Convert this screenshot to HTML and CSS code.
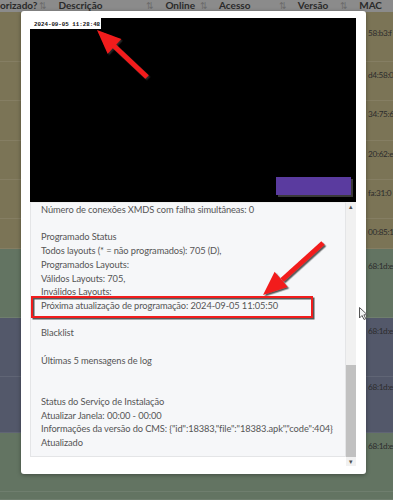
FILE: index.html
```html
<!DOCTYPE html>
<html lang="pt-BR">
<head>
    <meta charset="UTF-8">
    <meta name="viewport" content="width=device-width, initial-scale=1.0">
    <title>Status do display</title>
    <link rel="stylesheet" href="styles.css">
</head>
<body>
    <div class="table">
        <div class="thead">
            <div class="th c1"><span>orizado?</span><span class="sort">&#8645;</span></div>
            <div class="th c2"><span>Descrição</span><span class="sort">&#8645;</span></div>
            <div class="th c3"><span>Online</span><span class="sort">&#8645;</span></div>
            <div class="th c4"><span>Acesso</span><span class="sort">&#8645;</span></div>
            <div class="th c5"><span>Versão</span><span class="sort">&#8645;</span></div>
            <div class="th c6"><span>MAC</span></div>
        </div>
        <div class="row warn first"><div class="mac">58:b3:f</div></div>
        <div class="row warn r39"><div class="mac">d4:58:0</div></div>
        <div class="row warn r40"><div class="mac">34:75:6</div></div>
        <div class="row warn r39"><div class="mac">20:62:e</div></div>
        <div class="row warn r39"><div class="mac">fa:31:0</div></div>
        <div class="row warn r30"><div class="mac">00:85:1</div></div>
        <div class="row ok r69"><div class="mac">68:1d:e</div></div>
        <div class="row info r59"><div class="mac">68:1d:e</div></div>
        <div class="row info r56"><div class="mac">68:1d:e</div></div>
        <div class="row ok r59"><div class="mac">68:1d:e</div></div>
        <div class="row ok last"></div>
    </div>

    <div class="modal">
        <div class="screenshot">
            <div class="stamp">2024-09-05 11:28:48</div>
            <div class="widget"></div>
        </div>
        <div class="scroller">
            <div class="status">Número de conexões XMDS com falha simultâneas: 0

Programado Status
Todos layouts (* = não programados): 705 (D),
Programados Layouts:
Válidos Layouts: 705,
Inválidos Layouts:
Próxima atualização de programação: 2024-09-05 11:05:50

Blacklist

Últimas 5 mensagens de log


Status do Serviço de Instalação
Atualizar Janela: 00:00 - 00:00
Informações da versão do CMS: {"id":18383,"file":"18383.apk","code":404}
Atualizado</div>
            <div class="scrollbar">
                <div class="arrow">&#9652;</div>
                <div class="track"><div class="thumb"></div></div>
                <div class="arrow">&#9662;</div>
            </div>
        </div>
    </div>

    <!-- annotations drawn on top of the capture -->
    <svg class="marks" width="393" height="500" viewBox="0 0 393 500">
        <defs>
            <filter id="shadow" x="-20%" y="-20%" width="140%" height="140%">
                <feDropShadow dx="1.5" dy="1.5" stdDeviation="0.7" flood-color="#333" flood-opacity="0.8"/>
            </filter>
        </defs>
        <g filter="url(#shadow)" fill="#f21b1b" stroke="#f21b1b">
            <line x1="147" y1="77" x2="113" y2="45" stroke-width="5"/>
            <polygon points="97,30 121.3,39.1 107.6,53.7" stroke="none"/>
            <line x1="323" y1="243" x2="282" y2="280" stroke-width="5"/>
            <polygon points="263,295 287.7,286.9 274.6,271.7" stroke="none"/>
            <rect x="32" y="297" width="280" height="20" fill="none" stroke-width="2"/>
        </g>
        <path d="M359.5 307.5 L359.5 318 L362 315.5 L364 319.5 L365.8 318.7 L363.9 314.8 L367.3 314.8 Z" fill="#f4f4f4" stroke="#555" stroke-width="1"/>
    </svg>
</body>
</html>
```

FILE: styles.css
```css
body {
    margin: 0;
    width: 393px;
    height: 500px;
    overflow: hidden;
    position: relative;
    font-family: Lato, 'Open Sans', sans-serif;
    background-color: #636f63;
}

/* table behind the modal */

.table {
    height: 500px;
    overflow: hidden;
}

.thead {
    display: flex;
    height: 12px;
    background-color: #8b8b8b;
    font-size: 10px;
    font-weight: 700;
    color: #2a2a2a;
    line-height: 11px;
    overflow: hidden;
}

.th {
    display: flex;
    justify-content: space-between;
    padding-right: 11px;
    box-sizing: border-box;
    white-space: nowrap;
}

.sort {
    font-weight: 400;
    color: #6c6c6c;
    font-size: 9px;
}

.c1 { width: 60px; }
.c2 { width: 110px; }
.c3 { width: 55px; }
.c4 { width: 81px; }
.c5 { width: 63px; }
.c6 { flex: 1; }

.row {
    box-sizing: border-box;
    padding: 7px 0 0 368px;
    border-bottom: 1px solid rgba(255, 255, 255, 0.08);
    white-space: nowrap;
    overflow: hidden;
}

.mac {
    font-size: 8.2px;
    letter-spacing: -0.3px;
    line-height: 12px;
    color: #2c2c2c;
}

.first { height: 50px; padding-top: 15px; }
.r30 { height: 30px; }
.r39 { height: 39px; }
.r40 { height: 40px; }
.r56 { height: 56px; padding-top: 4px; }
.r59 { height: 59px; }
.r69 { height: 69px; padding-top: 11px; }
.last { height: 8px; }

.warn { background-color: #7b7456; }
.ok { background-color: #637462; }
.info { background-color: #53586a; }

/* modal */

.modal {
    position: absolute;
    left: 21px;
    top: 11px;
    width: 345px;
    height: 463px;
    box-sizing: border-box;
    padding: 7px 10px 0 9px;
    background-color: #ffffff;
    border-radius: 3px;
    box-shadow: 0 1px 4px rgba(0, 0, 0, 0.35);
}

.screenshot {
    height: 184px;
    background-color: #000000;
    display: flex;
    flex-direction: column;
    align-items: flex-start;
}

.stamp {
    background-color: #ffffff;
    width: 71px;
    height: 11px;
    box-sizing: border-box;
    padding: 3px 0 0 4px;
    font-family: 'Liberation Mono', monospace;
    font-size: 5.8px;
    line-height: 7px;
    font-weight: 700;
    color: #111111;
    white-space: nowrap;
}

.widget {
    margin-top: auto;
    margin-bottom: 7px;
    align-self: flex-end;
    margin-right: 5px;
    width: 75px;
    height: 18px;
    background-color: #5a3b9f;
    box-shadow: 2px 2px 0 #3a3a3a;
}

.scroller {
    display: flex;
    height: 264px;
}

.status {
    flex: 1;
    height: 255px;
    box-sizing: border-box;
    padding: 0 10px;
    background-color: #f6f7f9;
    border: 1px solid #e4e5e7;
    border-top-color: #eeeeee;
    white-space: pre;
    font-size: 9.3px;
    letter-spacing: -0.1px;
    line-height: 13.7px;
    color: #555555;
    overflow: hidden;
}

.scrollbar {
    width: 10px;
    display: flex;
    flex-direction: column;
    background-color: #f1f1f1;
}

.arrow {
    height: 9px;
    font-size: 7px;
    line-height: 9px;
    text-align: center;
    color: #505050;
}

.track {
    flex: 1;
    display: flex;
    flex-direction: column;
    justify-content: flex-end;
}

.thumb {
    height: 92px;
    background-color: #c1c1c1;
}

.marks {
    position: absolute;
    left: 0;
    top: 0;
    pointer-events: none;
}
```
